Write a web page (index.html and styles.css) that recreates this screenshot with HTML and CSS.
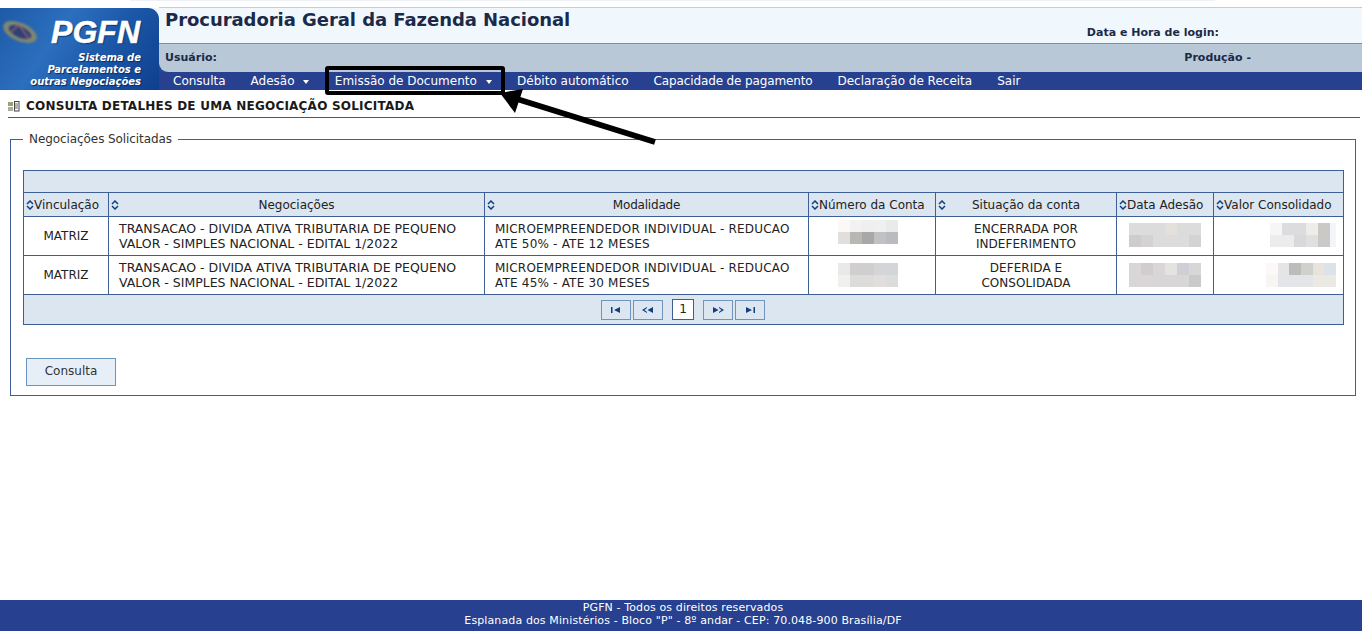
FILE: index.html
```html
<!DOCTYPE html>
<html lang="pt-BR">
<head>
<meta charset="utf-8">
<title>PGFN</title>
<link rel="stylesheet" href="styles.css">
</head>
<body>
<div class="top-strip"></div>
<header class="header">
  <div class="logo">
    <svg class="emblem" width="40" height="28" viewBox="0 0 40 28"><ellipse cx="19" cy="13" rx="18" ry="9" fill="#7f8870" transform="rotate(24 19 13)"/><ellipse cx="19" cy="13" rx="12" ry="5.5" fill="#2c3f78" transform="rotate(24 19 13)"/><path d="M10 13 L18 6 L28 20" fill="none" stroke="#a9626a" stroke-width="1.3"/></svg>
    <div class="logo-name">PGFN</div>
    <div class="logo-sub">Sistema de<br>Parcelamentos e<br>outras Negociações</div>
  </div>
  <div class="head-right">
    <div class="head-top">
      <h1 class="app-title">Procuradoria Geral da Fazenda Nacional</h1>
      <div class="login-label">Data e Hora de login:</div>
    </div>
    <div class="head-user">
      <span>Usuário:</span>
      <span class="env">Produção -</span>
    </div>
    <nav class="nav">
      <a>Consulta</a>
      <a>Adesão <i class="caret"></i></a>
      <a>Emissão de Documento <i class="caret"></i></a>
      <a>Débito automático</a>
      <a class="tight">Capacidade de pagamento</a>
      <a>Declaração de Receita</a>
      <a>Sair</a>
    </nav>
  </div>
</header>

<main class="main">
  <div class="page-title">
    <svg width="12" height="11" viewBox="0 0 12 11"><rect x="0" y="1" width="5" height="4" fill="#9aa36f"/><rect x="0" y="6" width="5" height="4" fill="#aab0a0"/><rect x="6.5" y=".5" width="4.5" height="9.5" fill="#fff" stroke="#444" stroke-width="1"/><path d="M7 3h3M7 5h3M7 7h3" stroke="#666"/></svg>
    <h2>CONSULTA DETALHES DE UMA NEGOCIAÇÃO SOLICITADA</h2>
  </div>

  <fieldset class="panel">
    <legend>Negociações Solicitadas</legend>
    <table class="grid">
      <colgroup>
        <col class="c1"><col class="c2"><col class="c3"><col class="c4"><col class="c5"><col class="c6"><col class="c7">
      </colgroup>
      <thead>
        <tr class="cap"><th colspan="7"></th></tr>
        <tr class="cols">
          <th><svg class="sort" viewBox="0 0 8 10"><path d="M1 4 L4 1 L7 4M1 6 L4 9 L7 6" fill="none" stroke="#123f7f" stroke-width="1.5"/></svg>Vinculação</th>
          <th><svg class="sort" viewBox="0 0 8 10"><path d="M1 4 L4 1 L7 4M1 6 L4 9 L7 6" fill="none" stroke="#123f7f" stroke-width="1.5"/></svg><span class="th-c">Negociações</span></th>
          <th><svg class="sort" viewBox="0 0 8 10"><path d="M1 4 L4 1 L7 4M1 6 L4 9 L7 6" fill="none" stroke="#123f7f" stroke-width="1.5"/></svg><span class="th-c th-m">Modalidade</span></th>
          <th><svg class="sort" viewBox="0 0 8 10"><path d="M1 4 L4 1 L7 4M1 6 L4 9 L7 6" fill="none" stroke="#123f7f" stroke-width="1.5"/></svg>Número da Conta</th>
          <th><svg class="sort" viewBox="0 0 8 10"><path d="M1 4 L4 1 L7 4M1 6 L4 9 L7 6" fill="none" stroke="#123f7f" stroke-width="1.5"/></svg><span class="th-c">Situação da conta</span></th>
          <th><svg class="sort" viewBox="0 0 8 10"><path d="M1 4 L4 1 L7 4M1 6 L4 9 L7 6" fill="none" stroke="#123f7f" stroke-width="1.5"/></svg>Data Adesão</th>
          <th><svg class="sort" viewBox="0 0 8 10"><path d="M1 4 L4 1 L7 4M1 6 L4 9 L7 6" fill="none" stroke="#123f7f" stroke-width="1.5"/></svg>Valor Consolidado</th>
        </tr>
      </thead>
      <tbody>
        <tr>
          <td class="ctr">MATRIZ</td>
          <td class="neg">TRANSACAO - DIVIDA ATIVA TRIBUTARIA DE PEQUENO VALOR - SIMPLES NACIONAL - EDITAL 1/2022</td>
          <td class="mod">MICROEMPREENDEDOR INDIVIDUAL - REDUCAO ATE 50% - ATE 12 MESES</td>
          <td class="ctr"><svg class="blur num up4" width="60" height="24" viewBox="0 0 5 2" shape-rendering="crispEdges"><rect width="1" height="1" fill="#fcf8f8"/><rect x="1" width="1" height="1" fill="#f2f2f2"/><rect x="2" width="1" height="1" fill="#efefef"/><rect x="3" width="1" height="1" fill="#f0f0f0"/><rect x="4" width="1" height="1" fill="#e9eaea"/><rect y="1" width="1" height="1" fill="#e2dedc"/><rect x="1" y="1" width="1" height="1" fill="#b9b7b3"/><rect x="2" y="1" width="1" height="1" fill="#a8a8a8"/><rect x="3" y="1" width="1" height="1" fill="#c0c1c5"/><rect x="4" y="1" width="1" height="1" fill="#b9bbbf"/></svg></td>
          <td class="ctr sit">ENCERRADA POR INDEFERIMENTO</td>
          <td class="ctr"><svg class="blur dat up1" width="72" height="24" viewBox="0 0 6 2" shape-rendering="crispEdges"><rect width="6" height="2" fill="#dcdcdc"/><rect y="1" width="1" height="1" fill="#cfcccc"/><rect x="3" width="1" height="1" fill="#e4e0dc"/><rect x="5" y="1" width="1" height="1" fill="#d2d3d3"/><rect x="1" y="1" width="1" height="1" fill="#d4d2d2"/></svg></td>
          <td class="rgt"><svg class="blur up1" width="66" height="24" viewBox="0 0 5.5 2" shape-rendering="crispEdges"><rect width="1" height="1" fill="#f6f6f6"/><rect x="1" width="2" height="1" fill="#dcdbdd"/><rect x="3" width="1" height="1" fill="#eeeee8"/><rect x="4" width="1" height="2" fill="#cbc8c8"/><rect x="5" width=".5" height="2" fill="#f2f6fa"/><rect y="1" width="2" height="1" fill="#ececec"/><rect x="2" y="1" width="1" height="1" fill="#d9d9dc"/><rect x="3" y="1" width="1" height="1" fill="#e0e0e2"/></svg></td>
        </tr>
        <tr>
          <td class="ctr">MATRIZ</td>
          <td class="neg">TRANSACAO - DIVIDA ATIVA TRIBUTARIA DE PEQUENO VALOR - SIMPLES NACIONAL - EDITAL 1/2022</td>
          <td class="mod">MICROEMPREENDEDOR INDIVIDUAL - REDUCAO ATE 45% - ATE 30 MESES</td>
          <td class="ctr"><svg class="blur num" width="60" height="24" viewBox="0 0 5 2" shape-rendering="crispEdges"><rect width="1" height="1" fill="#e9e9e7"/><rect x="1" width="2" height="1" fill="#d0cecf"/><rect x="3" width="2" height="1" fill="#d3d5d9"/><rect y="1" width="1" height="1" fill="#f0f0ee"/><rect x="1" y="1" width="2" height="1" fill="#dcdcdb"/><rect x="3" y="1" width="1" height="1" fill="#e2dedd"/><rect x="4" y="1" width="1" height="1" fill="#dcdcdc"/></svg></td>
          <td class="ctr sit">DEFERIDA E CONSOLIDADA</td>
          <td class="ctr"><svg class="blur dat" width="72" height="24" viewBox="0 0 6 2" shape-rendering="crispEdges"><rect width="6" height="2" fill="#d8d6d6"/><rect x="1" y="0" width="1" height="1" fill="#d2cccc"/><rect x="3" width="1" height="1" fill="#e4e3e1"/><rect x="4" width="1" height="1" fill="#cfcfd6"/><rect x="5" y="1" width="1" height="1" fill="#c8cbc9"/></svg></td>
          <td class="rgt"><svg class="blur" width="70" height="24" viewBox="0 0 6 2" shape-rendering="crispEdges"><rect width="1" height="1" fill="#fcf8f8"/><rect x="1" width="1" height="1" fill="#e4e6e6"/><rect x="2" width="1" height="1" fill="#bcbcbc"/><rect x="3" width="1" height="1" fill="#cfd1cd"/><rect x="4" width="1" height="1" fill="#e8e4dc"/><rect x="5" width="1" height="1" fill="#dde2ea"/><rect y="1" width="1" height="1" fill="#f8f6f2"/><rect x="1" y="1" width="3" height="1" fill="#e3e5e8"/><rect x="4" y="1" width="2" height="1" fill="#ebe9e4"/></svg></td>
        </tr>
      </tbody>
      <tfoot>
        <tr>
          <td colspan="7" class="pager-cell">
            <div class="pager">
              <span class="pg"><svg width="12" height="8" viewBox="0 0 12 8"><path d="M1 1h1.5v6h-1.5zM10 1v6L4 4z" fill="#123f7f"/></svg></span>
              <span class="pg pg-gap"><svg width="14" height="8" viewBox="0 0 14 8"><path d="M6 1v1L3.5 4L6 6v1L1 4zM12 1v6L6.5 4z" fill="#123f7f"/></svg></span>
              <span class="pg-num">1</span>
              <span class="pg pg-after"><svg width="14" height="8" viewBox="0 0 14 8"><path d="M2 1v6l5.5-3zM8 1v1l2.5 2L8 6v1l5-3z" fill="#123f7f"/></svg></span>
              <span class="pg"><svg width="12" height="8" viewBox="0 0 12 8"><path d="M2 1v6l6-3zM9.5 1H11v6H9.5z" fill="#123f7f"/></svg></span>
            </div>
          </td>
        </tr>
      </tfoot>
    </table>
    <button class="btn" type="button">Consulta</button>
  </fieldset>
</main>

<footer class="footer">
  <div>PGFN - Todos os direitos reservados</div>
  <div>Esplanada dos Ministérios - Bloco "P" - 8º andar - CEP: 70.048-900 Brasília/DF</div>
</footer>

<div class="hl-box"></div>
<svg class="arrow" width="170" height="60" viewBox="0 0 170 60"><path d="M165 52 L27 9" stroke="#000" stroke-width="6" fill="none"/><path d="M10 3 L33 -1 L25 23 Z" fill="#000"/></svg>
</body>
</html>
```
FILE: styles.css
```css
* { box-sizing: border-box; }
html, body { height: 100%; }
body {
  margin: 0;
  display: flex;
  flex-direction: column;
  height: 631px;
  overflow: hidden;
  position: relative;
  background: #fff;
  color: #222;
  font-family: "DejaVu Sans", Verdana, sans-serif;
  font-size: 12px;
}
.top-strip {
  height: 1px;
  flex: none;
  width: 1085px;
  margin-left: 130px;
  background: #eef1f5;
}
.header {
  display: flex;
  flex: none;
  margin-top: 7px;
  height: 82px;
  background: linear-gradient(#f1f8fd 0 30px, #1a4b9c 30px);
}
.logo {
  width: 159px;
  flex: none;
  position: relative;
  color: #fff;
  background: linear-gradient(125deg, #1d5aa6 0%, #2c6fbe 35%, #1c58a9 62%, #0f3f8e 100%);
  border-top-right-radius: 11px;
  text-align: right;
  padding-right: 18px;
}
.emblem { position: absolute; left: 1px; top: 11px; filter: blur(.8px); }
.logo-name {
  font: italic bold 32px/32px "Liberation Sans", Arial, sans-serif;
  margin: 8px 1px 0 0;
  -webkit-text-stroke: .5px #fff;
  text-shadow: 1px 1px 1px #0a2a60;
}
.logo-sub {
  font: italic bold 10px/12px "DejaVu Sans", Verdana, sans-serif;
  margin-top: 4px;
  text-shadow: 1px 1px 1px #0a2a60;
  white-space: nowrap;
}
.head-right { flex: 1; display: flex; flex-direction: column; }
.head-top {
  height: 37px;
  flex: none;
  background: #f1f8fd;
  border-bottom: 1px solid #7d8f9f;
  border-top: 1px solid #ccc;
  display: flex;
  justify-content: space-between;
  padding: 1px 143px 0 6px;
  margin-top: -1px;
}
.app-title {
  margin: 0;
  font-size: 18px;
  font-weight: bold;
  line-height: 22px;
  letter-spacing: -.05px;
  color: #1c2a4a;
}
.login-label {
  font-weight: bold;
  font-size: 11px;
  padding-top: 17px;
  color: #1c2a4a;
}
.head-user {
  height: 28px;
  flex: none;
  background: #b8c8d6;
  border-bottom-left-radius: 9px;
  display: flex;
  justify-content: space-between;
  padding: 7px 111px 0 6px;
  font-size: 11px;
  font-weight: bold;
  color: #1c2a4a;
}
.nav {
  height: 18px;
  flex: none;
  background: #27408f;
  display: flex;
  gap: 25px;
  padding-left: 14px;
  color: #fff;
  line-height: 18px;
  white-space: nowrap;
}
.nav .tight { letter-spacing: -.13px; }
.caret {
  display: inline-block;
  border: 3.5px solid transparent;
  border-top: 4px solid #fff;
  border-bottom: 0;
  margin-left: 5px;
  margin-right: .5px;
  vertical-align: 1px;
}
.main { flex: 1; padding: 0 6px 0 10px; }
.page-title {
  margin: 8px 0 0 -2px;
  height: 20px;
  width: 1352px;
  display: flex;
  align-items: flex-start;
  gap: 6px;
  border-bottom: 1px solid #555;
}
.page-title svg { margin-top: 3px; }
.page-title h2 {
  margin: 0;
  font-size: 12px;
  font-weight: bold;
  line-height: 17px;
  letter-spacing: .22px;
  color: #1a1a1a;
}
.panel {
  margin: 14px 0 0;
  padding: 24px 12px 10px 12px;
  border: 1px solid #3e5f96;
  width: 1346px;
  height: 264px;
  min-width: 0;
}
.panel legend {
  margin-left: 0;
  padding: 0 6px;
  color: #333;
  line-height: 14px;
  letter-spacing: -.08px;
}
.grid {
  border-collapse: collapse;
  table-layout: fixed;
  width: 1320px;
}
.c1 { width: 85px; }
.c2 { width: 376px; }
.c3 { width: 324px; }
.c4 { width: 127px; }
.c5 { width: 181px; }
.c6 { width: 97px; }
.c7 { width: 130px; }
.grid th, .grid td { border: 1px solid #3e5f96; }
.cap th { height: 22px; background: #dce6f1; }
.cols th {
  height: 24px;
  background: #dce6f1;
  font-weight: normal;
  color: #222;
  text-align: left;
  padding: 0 0 0 2px;
  white-space: nowrap;
}
.sort { width: 8px; height: 10px; vertical-align: -1px; }
.th-c { display: inline-block; width: calc(100% - 18px); text-align: center; }
.th-m { letter-spacing: -.2px; }
.grid tbody td {
  height: 39px;
  padding: 0 10px;
  line-height: 15px;
  color: #222;
}
.grid tbody td.neg { font-size: 12.5px; }
.grid tbody td.mod { letter-spacing: .2px; padding-top: 1px; }
.grid tbody td.ctr { text-align: center; padding: 0 18px; }
.grid tbody td.sit { letter-spacing: .06px; padding-top: 2px; }
.grid tbody td.rgt { text-align: right; padding-right: 7px; }
.blur { display: inline-block; vertical-align: middle; filter: blur(.6px); }
.num { margin-right: 8px; }
.dat { margin-left: -6px; }
.up4 { margin-bottom: 8px; }
.up1 { margin-bottom: 2px; }
.pager-cell { height: 30px; background: #dce6f1; padding: 0; }
.pager { display: flex; justify-content: center; align-items: center; gap: 2px; margin-left: -1px; }
.pg {
  width: 30px;
  height: 20px;
  border: 1px solid #6f94bd;
  background: #dce6f1;
  display: flex;
  align-items: center;
  justify-content: center;
}
.pg-gap { margin-right: 7px; }
.pg-after { margin-left: 7px; }
.pg-num {
  width: 22px;
  height: 21px;
  border: 1px solid #3e5f96;
  background: #fff;
  text-align: center;
  line-height: 19px;
}
.btn {
  display: block;
  margin: 33px 0 0 3px;
  width: 90px;
  height: 28px;
  padding: 0 0 3px;
  background: #e6eff8;
  border: 1px solid #6a93bd;
  font: 12px "DejaVu Sans", Verdana, sans-serif;
  color: #333;
}
.footer {
  height: 31px;
  flex: none;
  background: #27408f;
  color: #fff;
  text-align: center;
  font-size: 11px;
  line-height: 13px;
  letter-spacing: .12px;
  padding: 1px 0 0 4px;
}
.hl-box {
  position: absolute;
  left: 325px;
  top: 66px;
  width: 180px;
  height: 29px;
  border: 4px solid #000;
  border-radius: 3px;
}
.arrow { position: absolute; left: 490px; top: 90px; overflow: visible; }
```
